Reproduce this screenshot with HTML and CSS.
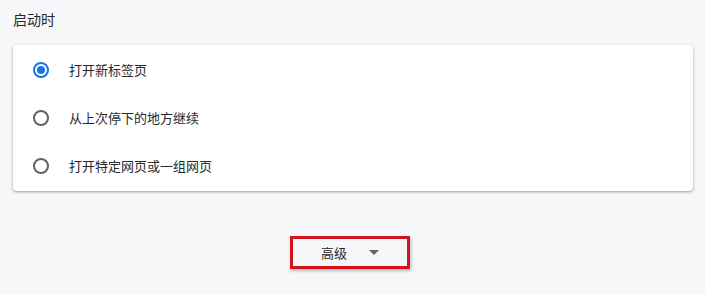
FILE: index.html
```html
<!DOCTYPE html>
<html>
<head>
    <title>设置</title>
    <meta charset="UTF-8">
    <link rel="stylesheet" href="styles.css">
</head>
<body>
    <div class="section">
        <h2 class="section-title">启动时</h2>
        <div class="card">
            <label class="radio-row">
                <span class="radio checked"></span>
                <span class="radio-label">打开新标签页</span>
            </label>
            <label class="radio-row">
                <span class="radio"></span>
                <span class="radio-label">从上次停下的地方继续</span>
            </label>
            <label class="radio-row">
                <span class="radio"></span>
                <span class="radio-label">打开特定网页或一组网页</span>
            </label>
        </div>
    </div>

    <div class="advanced">
        <button class="advanced-btn">
            <span>高级</span>
            <span class="arrow"></span>
        </button>
    </div>
</body>
</html>
```

FILE: styles.css
```css
body {
    margin: 0;
    background: #f6f7f8;
    font-family: "Noto Sans CJK SC", "Noto Sans", sans-serif;
    color: #26282b;
    width: 705px;
    height: 294px;
    overflow: hidden;
}

.section {
    padding: 0 12px 0 13px;
}

.section-title {
    margin: 0;
    padding-top: 9px;
    height: 36px;
    font-size: 14px;
    font-weight: normal;
    line-height: 20px;
    box-sizing: border-box;
}

.card {
    background: white;
    border-radius: 4px;
    box-shadow: 0 1px 2px rgba(60,64,67,0.3), 0 1px 3px 1px rgba(60,64,67,0.15);
    margin-top: 9px;
    padding: 1px 0;
}

.radio-row {
    display: flex;
    align-items: center;
    height: 48px;
    padding-left: 20px;
}

.radio {
    width: 12px;
    height: 12px;
    border: 2px solid #5f6368;
    border-radius: 50%;
    position: relative;
    flex-shrink: 0;
}

.radio.checked {
    border-color: #1a73e8;
}

.radio.checked::after {
    content: "";
    position: absolute;
    left: 2px;
    top: 2px;
    width: 8px;
    height: 8px;
    border-radius: 50%;
    background: #1a73e8;
}

.radio-label {
    margin-left: 20px;
    font-size: 13px;
    line-height: 20px;
}

.advanced {
    display: flex;
    justify-content: center;
    margin-top: 45px;
    padding-right: 5px;
}

.advanced-btn {
    display: flex;
    align-items: center;
    justify-content: center;
    gap: 22px;
    width: 120px;
    height: 33px;
    border: 3px solid #d3141b;
    background: transparent;
    box-shadow: 1px 2px 3px rgba(0,0,0,0.25);
    font-family: inherit;
    font-size: 13px;
    color: #26282b;
    padding: 0;
}

.arrow {
    width: 0;
    height: 0;
    border-left: 5px solid transparent;
    border-right: 5px solid transparent;
    border-top: 5px solid #5f6368;
}
```
